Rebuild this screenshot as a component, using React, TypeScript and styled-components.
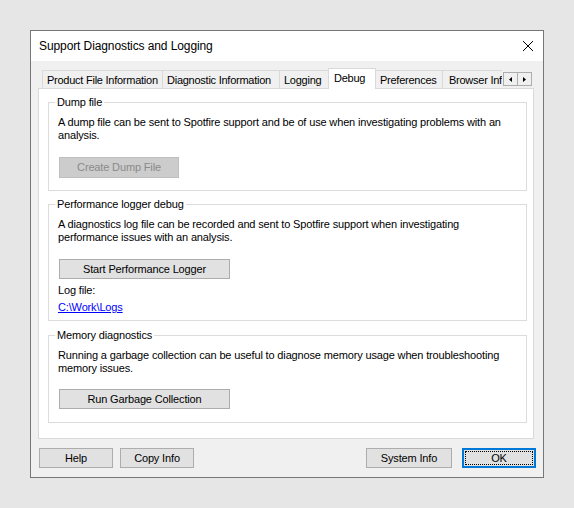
import { createGlobalStyle, styled } from "styled-components";

const FONT = `"Liberation Sans", Arial, sans-serif`;

const GlobalStyle = createGlobalStyle`
  html, body {
    margin: 0;
    padding: 0;
    background: #e6e6e6;
  }
  body {
    font-family: ${FONT};
    font-size: 11px;
    color: #000;
  }
`;

const Window = styled.div`
  margin: 30px 0 0 30px;
  width: 514px;
  height: 448px;
  box-sizing: border-box;
  border: 1px solid #767676;
  background: #f0f0f0;
  display: flex;
  flex-direction: column;
`;

const TitleBar = styled.div`
  height: 30px;
  background: #fff;
  display: flex;
  align-items: center;
  justify-content: space-between;
  padding: 0 9px 0 8px;
  font-size: 12px;
  letter-spacing: -0.1px;
`;

const CloseButton = styled.div`
  width: 12px;
  height: 12px;
  display: flex;
`;

const Body = styled.div`
  flex: 1;
  padding: 7px 9px 0 7px;
  display: flex;
  flex-direction: column;
  letter-spacing: -0.15px;
`;

const TabStrip = styled.div`
  display: flex;
  height: 21px;
  position: relative;
  z-index: 1;
  letter-spacing: -0.25px;
`;

const Tabs = styled.div`
  display: flex;
  align-items: flex-start;
  width: 460px;
  margin-left: 4px;
  overflow: hidden;
`;

const Tab = styled.div<{ $w: number; $active?: boolean }>`
  flex: none;
  box-sizing: border-box;
  width: ${(p) => p.$w}px;
  height: ${(p) => (p.$active ? 21 : 18)}px;
  margin-top: ${(p) => (p.$active ? 0 : 2)}px;
  margin-left: -1px;
  border: 1px solid #d9d9d9;
  border-bottom: none;
  background: ${(p) => (p.$active ? "#fff" : "#f0f0f0")};
  padding: ${(p) => (p.$active ? "3px 0 0 5px" : "3px 0 0 4px")};
  white-space: nowrap;
  line-height: 13px;

  &:first-child {
    margin-left: 0;
  }
`;

const Arrows = styled.div`
  display: flex;
  margin: 4px 0 0 1px;
`;

const ArrowButton = styled.div`
  width: 15px;
  height: 14px;
  box-sizing: border-box;
  border: 1px solid #adadad;
  background: #f0f0f0;
  display: flex;
  align-items: center;
  justify-content: center;
  & + & {
    margin-left: -1px;
  }
`;

const Panel = styled.div`
  margin-top: -1px;
  height: 351px;
  box-sizing: border-box;
  border: 1px solid #d9d9d9;
  background: #fff;
  padding: 7px 6px 0 9px;
  display: flex;
  flex-direction: column;
  gap: 7px;
`;

const Group = styled.fieldset<{ $pb: number; $mt?: number }>`
  margin: ${(p) => p.$mt ?? 0}px 0 0 0;
  min-width: 0;
  border: 1px solid #dcdcdc;
  padding: 0 8px ${(p) => p.$pb}px 9px;
  display: flex;
  flex-direction: column;
  align-items: flex-start;
`;

const Legend = styled.legend`
  padding: 0 2px;
  margin-left: -3px;
  line-height: 13px;
`;

const Text = styled.div<{ $mt?: number }>`
  margin-top: ${(p) => p.$mt ?? 7}px;
  line-height: 13px;
`;

const Button = styled.div<{ $w: number; $h?: number; $mt?: number; $disabled?: boolean }>`
  box-sizing: border-box;
  flex: none;
  width: ${(p) => p.$w}px;
  height: ${(p) => p.$h ?? 20}px;
  margin-top: ${(p) => p.$mt ?? 0}px;
  border: 1px solid ${(p) => (p.$disabled ? "#bfbfbf" : "#adadad")};
  background: ${(p) => (p.$disabled ? "#cccccc" : "#e1e1e1")};
  color: ${(p) => (p.$disabled ? "#8a8a8a" : "#000")};
  display: flex;
  align-items: center;
  justify-content: center;
  line-height: 13px;
`;

const GroupButton = styled(Button)`
  margin-left: 1px;
`;

const DefaultButton = styled(Button)`
  border: 2px solid #0078d7;
  position: relative;

  &::after {
    content: "";
    position: absolute;
    inset: 1px;
    border: 1px dotted #000;
  }
`;

const Link = styled.a`
  margin-top: 4px;
  line-height: 13px;
  color: #0000ff;
  text-decoration: underline;
`;

const Footer = styled.div`
  display: flex;
  gap: 7px;
  margin: 9px -2px 0 1px;
`;

const Spacer = styled.div`
  flex: 1;
`;

const Left = () => (
  <svg width="3" height="5" viewBox="0 0 3 5">
    <path d="M3 0 L0 2.5 L3 5 Z" fill="#000" />
  </svg>
);

const Right = () => (
  <svg width="3" height="5" viewBox="0 0 3 5">
    <path d="M0 0 L3 2.5 L0 5 Z" fill="#000" />
  </svg>
);

export default function App() {
  return (
    <>
      <GlobalStyle />
      <Window>
        <TitleBar>
          <span>Support Diagnostics and Logging</span>
          <CloseButton>
            <svg width="12" height="12" viewBox="0 0 12 12">
              <path d="M1 1 L11 11 M11 1 L1 11" stroke="#000" strokeWidth="1" />
            </svg>
          </CloseButton>
        </TitleBar>
        <Body>
          <TabStrip>
            <Tabs>
              <Tab $w={121}>Product File Information</Tab>
              <Tab $w={118}>Diagnostic Information</Tab>
              <Tab $w={50}>Logging</Tab>
              <Tab $w={48} $active>
                Debug
              </Tab>
              <Tab $w={68}>Preferences</Tab>
              <Tab $w={80} style={{ paddingLeft: 6 }}>
                Browser Information
              </Tab>
            </Tabs>
            <Arrows>
              <ArrowButton>
                <Left />
              </ArrowButton>
              <ArrowButton>
                <Right />
              </ArrowButton>
            </Arrows>
          </TabStrip>
          <Panel>
            <Group $pb={12}>
              <Legend>Dump file</Legend>
              <Text>
                A dump file can be sent to Spotfire support and be of use when investigating problems with an
                <br />
                analysis.
              </Text>
              <GroupButton $w={120} $h={21} $mt={15} $disabled>
                Create Dump File
              </GroupButton>
            </Group>
            <Group $pb={6}>
              <Legend>Performance logger debug</Legend>
              <Text>
                A diagnostics log file can be recorded and sent to Spotfire support when investigating
                <br />
                performance issues with an analysis.
              </Text>
              <GroupButton $w={171} $mt={15}>
                Start Performance Logger
              </GroupButton>
              <Text $mt={5}>Log file:</Text>
              <Link href="#">C:\Work\Logs</Link>
            </Group>
            <Group $pb={13} $mt={1}>
              <Legend>Memory diagnostics</Legend>
              <Text>
                Running a garbage collection can be useful to diagnose memory usage when troubleshooting
                <br />
                memory issues.
              </Text>
              <GroupButton $w={171} $mt={14}>
                Run Garbage Collection
              </GroupButton>
            </Group>
          </Panel>
          <Footer>
            <Button $w={74}>Help</Button>
            <Button $w={74}>Copy Info</Button>
            <Spacer />
            <Button $w={86} style={{ marginRight: 3 }}>
              System Info
            </Button>
            <DefaultButton $w={74}>OK</DefaultButton>
          </Footer>
        </Body>
      </Window>
    </>
  );
}
